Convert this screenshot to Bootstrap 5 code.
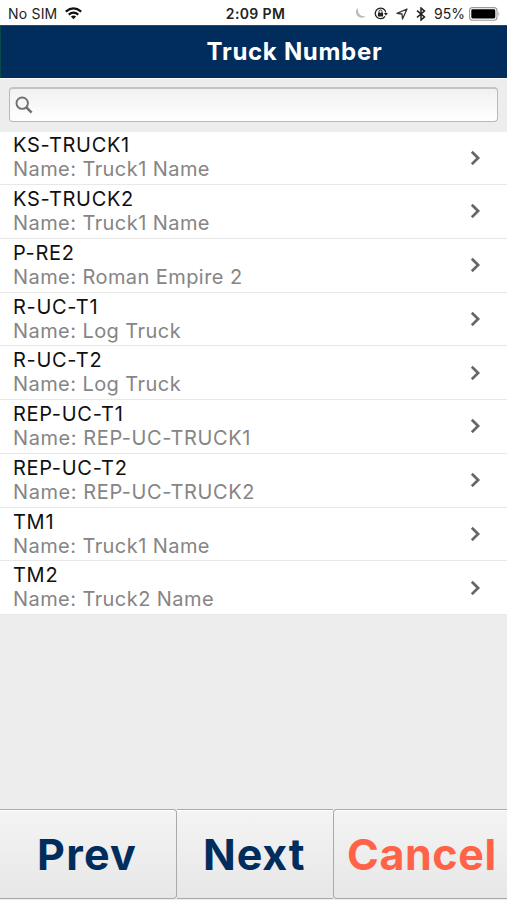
<!DOCTYPE html>
<html lang="en">
<head>
<meta charset="utf-8">
<meta name="viewport" content="width=device-width, initial-scale=1">
<title>Truck Number</title>
<link href="https://cdn.jsdelivr.net/npm/bootstrap@5.3.0/dist/css/bootstrap.min.css" rel="stylesheet">
<style>
body{font-family:Inter,"Liberation Sans",sans-serif;background:#ededed;height:900px;overflow:hidden}
.status{height:25px;font-size:14px;line-height:24px;color:#222;padding:2px 7px 0 8px}
.status > div{flex:1 1 0}
.clock{font-weight:600;letter-spacing:.35px;padding-left:3px}
.carrier{letter-spacing:.2px}
.title-bar{height:53px;background:#002d5c;border-top:1px solid #23486f;border-left:1px solid #064b45;padding-left:81px}
.title-bar h1{font-size:24px;font-weight:700;letter-spacing:.7px;line-height:51px}
.search-wrap{height:54px;padding:8px 9px 0 9px;border-top:1px solid #fafafa}
.search-box{height:35px;border:1px solid #b9b9b9;border-top:2px solid #c4c4c4;border-radius:4px;background:linear-gradient(#f1f1f1,#fff);padding-left:5px}
.truck{height:53.75px;background:#fff;border-bottom:1px solid #e8e8e8;padding:2px 25px 0 13px}
.truck:first-child{height:53px;padding-top:1px}
.code{font-size:20px;line-height:24px;color:#101010;letter-spacing:.7px}
.desc{font-size:20px;line-height:25px;color:#858585;letter-spacing:.43px}
.desc.caps{letter-spacing:.58px}
.actions{height:91px}
.act{height:90px;border:1px solid #aaa;border-left:0;border-radius:0 4px 4px 0;background:linear-gradient(#f4f4f4,#e7e7e7);font-size:43px;font-weight:700;color:#002d5c;line-height:87px;padding:0;box-shadow:inset 0 1px #fff;letter-spacing:1.3px}
.act-prev{width:177px;padding-left:37px}
.act-next{width:156px;padding-left:26px;border-right:0;border-radius:0;letter-spacing:.9px}
.act-cancel{width:174px;padding-left:13px;border-left:1px solid #aaa;border-right:0;border-radius:4px 0 0 4px;color:#ff6347;letter-spacing:.6px}
</style>
</head>
<body class="d-flex flex-column">
<header>
  <div class="status bg-white d-flex align-items-center">
    <div class="d-flex align-items-center"><span class="carrier">No SIM</span>
      <svg class="ms-2" width="17" height="13" viewBox="0 0 17 13" fill="none" stroke="#111" stroke-width="2.2"><path d="M.8 4.6Q8.5-1.8 16.2 4.6M3.7 7.6Q8.5 3.8 13.3 7.6"/><path d="M5.9 9.6Q8.5 7.6 11.1 9.6L8.5 12.3z" fill="#111" stroke="none"/></svg>
    </div>
    <div class="clock text-center">2:09 PM</div>
    <div class="d-flex align-items-center justify-content-end">
      <svg width="12" height="13" viewBox="0 0 12 13"><path d="M3.6 1A5.7 5.7 0 1 0 11.6 9.2Q4 10.4 3.6 1z" fill="#bbb"/></svg>
      <svg class="ms-2" width="14" height="13" viewBox="0 0 14 13"><path d="M11 9.3A5.3 5.3 0 1 1 11.8 5.5" fill="none" stroke="#222" stroke-width="1.3"/><path d="M9.9 6h4l-2 2.8z" fill="#222"/><rect x="3.9" y="5.7" width="5.2" height="3.9" rx=".4" fill="#222"/><path d="M5 6V4.5a1.5 1.5 0 0 1 3 0V6" fill="none" stroke="#222"/></svg>
      <svg width="12" height="12" viewBox="0 0 12 12" class="ms-2"><path d="M11 1 1 5.4l5 .6.5 5z" fill="none" stroke="#333" stroke-width="1.3" stroke-linejoin="round"/></svg>
      <svg width="10" height="14" viewBox="0 0 10 14" class="ms-2"><path d="m1 3.7 7.5 6.2L5 13V1l3.5 3.1L1 10.3" fill="none" stroke="#222" stroke-width="1.5"/></svg>
      <span class="ms-2">95%</span>
      <svg class="ms-1 flex-shrink-0" width="31" height="14" viewBox="0 0 31 14"><rect x=".6" y=".6" width="27.4" height="12.6" rx="3" fill="#fff" stroke="#999" stroke-width="1.1"/><rect x="2.3" y="2.3" width="24" height="9.2" rx="1.4"/><path d="M29.5 4.7q1.6 2.2 0 4.4z" fill="#999"/></svg>
    </div>
  </div>
  <div class="title-bar text-white text-center"><h1 class="m-0">Truck Number</h1></div>
</header>
<div class="search-wrap">
  <div class="search-box d-flex align-items-center">
    <svg width="18" height="18" viewBox="0 0 18 18" fill="none" stroke="#707070"><circle cx="7.2" cy="7.2" r="5.7" stroke-width="1.9"/><path d="m11.4 11.4 5.2 5.2" stroke-width="2.6"/></svg>
  </div>
</div>
<main class="flex-grow-1">
  <ul class="list-unstyled m-0" id="trucks"></ul>
</main>
<footer class="actions d-flex">
  <button class="act act-prev text-start">Prev</button>
  <button class="act act-next text-start">Next</button>
  <button class="act act-cancel text-start">Cancel</button>
</footer>
<script src="https://cdn.jsdelivr.net/npm/bootstrap@5.3.0/dist/js/bootstrap.bundle.min.js"></script>
<script>
const trucks=[["KS-TRUCK1","Truck1 Name"],["KS-TRUCK2","Truck1 Name"],["P-RE2","Roman Empire 2"],["R-UC-T1","Log Truck"],["R-UC-T2","Log Truck"],["REP-UC-T1","REP-UC-TRUCK1"],["REP-UC-T2","REP-UC-TRUCK2"],["TM1","Truck1 Name"],["TM2","Truck2 Name"]];
document.getElementById("trucks").innerHTML=trucks.map(([code,name])=>`<li class="truck d-flex justify-content-between align-items-center"><div class="align-self-start"><div class="code">${code}</div><div class="desc${name===name.toUpperCase()?" caps":""}">Name: ${name}</div></div><svg class="mb-1" width="12" height="16" viewBox="0 0 12 16" fill="none" stroke="#666" stroke-width="2.7"><path d="m1.8 2.8 6.3 6.2-6.3 6.2"/></svg></li>`).join("");
</script>
</body>
</html>
